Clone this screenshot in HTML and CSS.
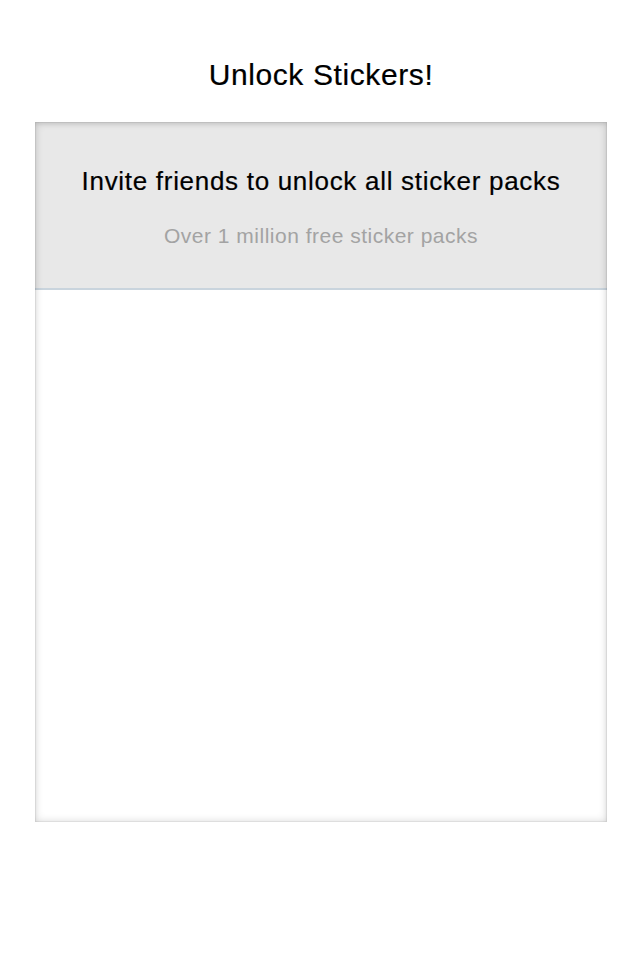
FILE: index.html
```html
<!DOCTYPE html>
<html lang="en">
<head>
<meta charset="utf-8">
<title>Unlock Stickers!</title>
<link rel="stylesheet" href="styles.css">
</head>
<body>
  <div class="screen">
    <h1 class="title">Unlock Stickers!</h1>
    <section class="card">
      <header class="card-header">
        <p class="card-heading">Invite friends to unlock all sticker packs</p>
        <p class="card-sub">Over 1 million free sticker packs</p>
      </header>
      <div class="card-body"></div>
    </section>
  </div>
</body>
</html>
```
FILE: styles.css
```css
* { box-sizing: border-box; }
html, body { margin: 0; padding: 0; background: #ffffff; }
body {
  font-family: "Liberation Sans", Arial, Helvetica, sans-serif;
  color: #000;
}
.screen {
  width: 640px;
  height: 960px;
  padding-left: 2px;
  display: flex;
  flex-direction: column;
  align-items: center;
}
.title {
  margin: 0;
  padding-top: 57px;
  font-size: 30px;
  line-height: 36px;
  font-weight: normal;
  letter-spacing: 0.6px;
  text-align: center;
  -webkit-text-stroke: 0.2px #000;
}
.card {
  position: relative;
  margin-top: 29px;
  width: 572px;
  height: 700px;
  background: #ffffff;
  display: flex;
  flex-direction: column;
}
.card::after {
  content: "";
  position: absolute;
  inset: 0;
  pointer-events: none;
  box-shadow: inset 0 0 0 1px rgba(0,0,0,0.05), inset 0 0 9px rgba(0,0,0,0.17), inset 0 2px 4px rgba(0,0,0,0.08);
}
.card-header {
  height: 168px;
  background: #e8e8e8;
  border-bottom: 2px solid #c9d4dd;
  padding-top: 43px;
  text-align: center;
  display: flex;
  flex-direction: column;
  align-items: center;
}
.card-heading {
  margin: 0;
  font-size: 26px;
  line-height: 32px;
  letter-spacing: 0.7px;
  color: #000;
  -webkit-text-stroke: 0.2px #000;
}
.card-sub {
  margin: 26px 0 0;
  font-size: 21px;
  line-height: 26px;
  letter-spacing: 0.5px;
  color: #a3a3a3;
}
.card-body {
  flex: 1;
}
```
